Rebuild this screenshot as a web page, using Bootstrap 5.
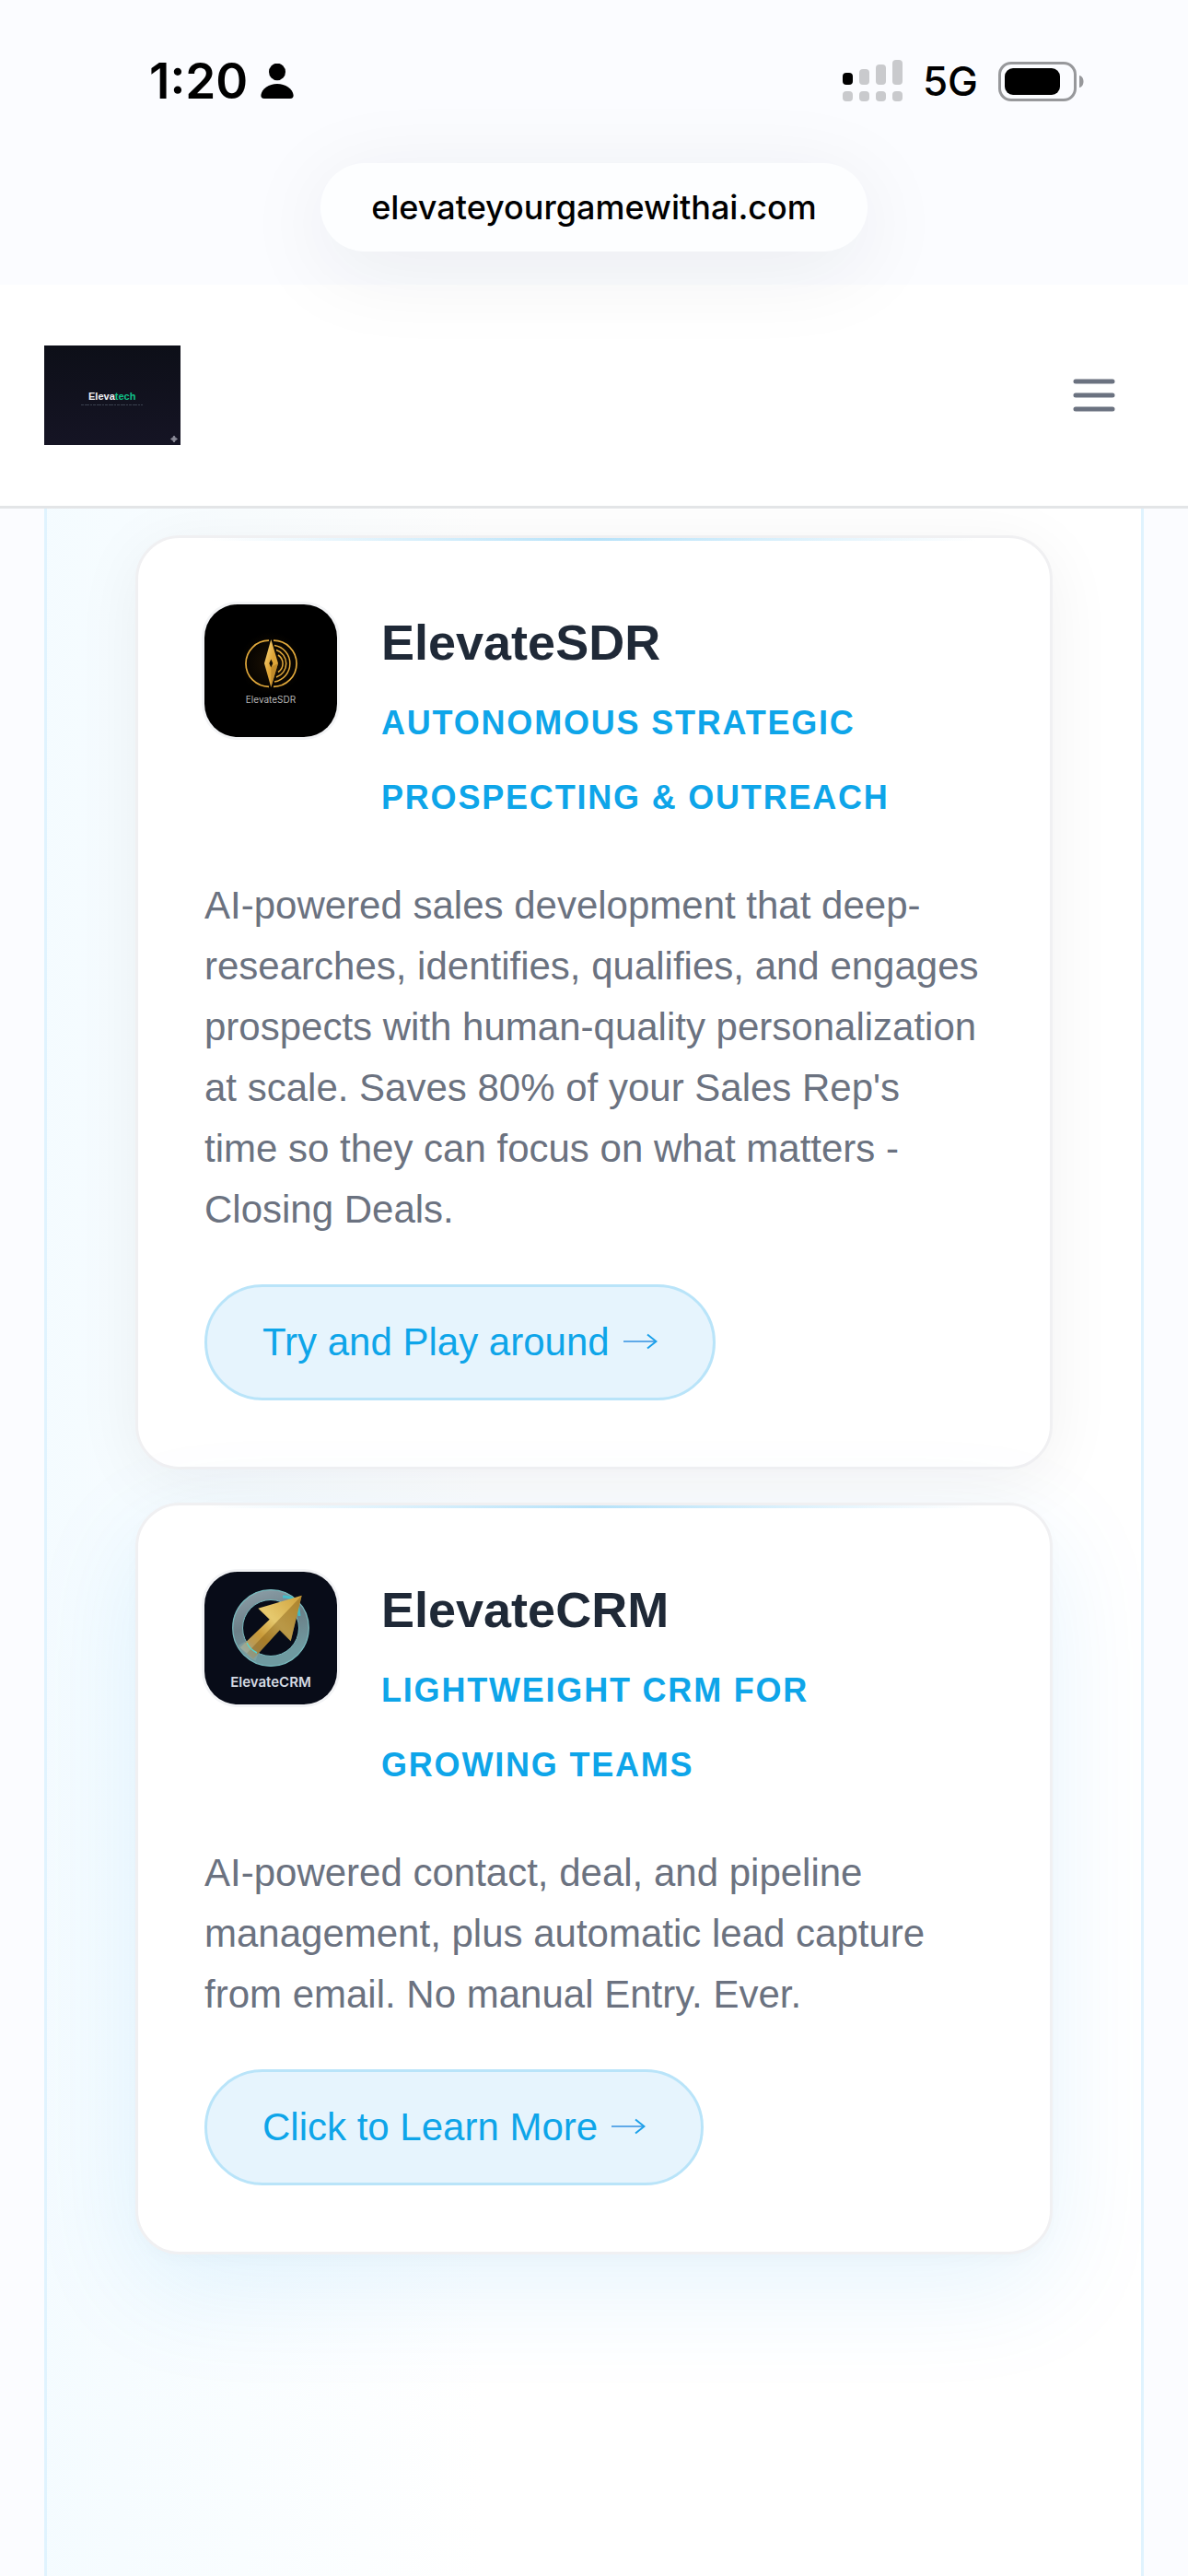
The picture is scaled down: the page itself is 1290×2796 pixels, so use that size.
<!DOCTYPE html>
<html lang="en">
<head>
<meta charset="utf-8">
<meta name="viewport" content="width=device-width, initial-scale=1">
<title>Elevatech</title>
<link href="https://cdn.jsdelivr.net/npm/bootstrap@5.3.0/dist/css/bootstrap.min.css" rel="stylesheet">
<style>
  body { background: #fbfcff; font-family: "Liberation Sans", Arial, sans-serif; color: #1f2937; }
  .phone-top { padding-top: 61px; padding-bottom: 36px; font-family: Inter, sans-serif; color: #000; z-index: 2; }
  .status-row { height: 54px; margin-bottom: 62px; padding-left: 162px; padding-right: 113px; }
  .status-time { font-size: 53px; font-weight: 600; line-height: 54px; margin-right: 14px; }
  .status-net { font-size: 44px; font-weight: 500; line-height: 54px; margin: 0 22px; }
  .address-pill { height: 96px; padding: 0 55px; border-radius: 48px; background: #fdfeff; color: #000; font-size: 36px; font-weight: 500; box-shadow: 0 18px 96px rgba(30, 40, 45, .08); }
  .site-nav { padding: 66px 48px; background: #fff; border-bottom: 3px solid #e3e5e7; }
  .site-nav .navbar-toggler { padding: 30px; border: 0; border-radius: 0; }
  .page-shell { padding: 0 48px; }
  .product-panel { padding: 29px 96px 96px; border: solid #e0f3fe; border-width: 0 3px;
    background: linear-gradient(to right, rgba(243, 251, 255, .9), rgba(255, 255, 255, 0) 40%), #fff; overflow: hidden; }
  .product-list { gap: 36px; }
  .product-card { border: 3px solid #f0f0f2; border-radius: 48px; box-shadow: 0 12px 72px rgba(20, 20, 40, .06); }
  .product-card.is-lit { box-shadow: 0 36px 120px rgba(14, 150, 233, .1), 0 6px 18px rgba(0, 0, 0, .02); }
  .product-card::before { content: ""; height: 3px; margin-bottom: -3px; background: linear-gradient(90deg, transparent 8%, #b6e2f9 50%, transparent 92%); }
  .product-card .card-body { padding: 72px; }
  .product-head { gap: 48px; margin-bottom: 44px; }
  .product-icon { width: 144px; height: 144px; border-radius: 36px; box-shadow: 0 0 0 3px #f3f4f6; }
  .product-name { font-size: 54px; line-height: 82px; font-weight: 700; margin-bottom: 6px; }
  .product-tag { font-size: 36px; line-height: 81px; font-weight: 700; letter-spacing: .05em; color: #0ea5e9; }
  .product-text { font-size: 42px; line-height: 66px; color: #6b7280; margin-bottom: 48px; }
  .btn-soft { --bs-btn-color: #0ea5e9; --bs-btn-bg: #e6f4fd; --bs-btn-border-color: #b9e4f9; --bs-btn-hover-color: #0284c7; --bs-btn-hover-bg: #d6eefc; --bs-btn-hover-border-color: #8fd3f5;
    --bs-btn-border-width: 3px; height: 126px; padding: 0 60px; border-radius: 63px; font-size: 42px; line-height: 60px; gap: 13px; }
</style>
<script src="https://cdn.jsdelivr.net/npm/bootstrap@5.3.0/dist/js/bootstrap.bundle.min.js"></script>
</head>
<body class="d-flex flex-column min-vh-100">

<div class="phone-top position-relative">
  <div class="status-row d-flex align-items-center justify-content-between">
    <div class="d-flex align-items-center">
      <span class="status-time">1:20</span>
      <svg width="36" height="38" viewBox="0 0 36 38" aria-hidden="true"><ellipse cx="18" cy="9" rx="9" ry="9.3"/><path d="M4 38Q0 38 .4 34C1.500 27 9 22 18 22s16.500 5 17.600 12Q36 38 32 38z"/></svg>
    </div>
    <div class="d-flex align-items-center">
      <svg width="65" height="46" viewBox="0 0 65 46" aria-hidden="true">
        <rect x="0" y="14" width="11" height="13" rx="4"/>
        <g fill="#c9cacd"><rect x="18" y="10" width="11" height="17" rx="4"/><rect x="36" y="5" width="11" height="22" rx="4"/><rect x="54" y="0" width="11" height="27" rx="4"/>
        <rect x="0" y="34" width="11" height="11" rx="4"/><rect x="18" y="34" width="11" height="11" rx="4"/><rect x="36" y="34" width="11" height="11" rx="4"/><rect x="54" y="34" width="11" height="11" rx="4"/></g>
      </svg>
      <span class="status-net">5G</span>
      <svg width="93" height="43" viewBox="0 0 93 43" aria-hidden="true"><rect x="1.500" y="1.500" width="82" height="40" rx="12.500" fill="none" stroke="#97989b" stroke-width="3"/><rect x="7" y="7" width="60" height="29" rx="9"/><path d="M88 15c6 1 6 12 0 13z" fill="#97989b"/></svg>
    </div>
  </div>
  <div class="d-flex justify-content-center">
    <a href="#" class="address-pill d-flex align-items-center text-decoration-none">elevateyourgamewithai.com</a>
  </div>
</div>

<nav class="site-nav navbar">
  <a href="#" class="navbar-brand p-0 m-0" aria-label="Elevatech home">
    <svg class="d-block" width="148" height="108" viewBox="0 0 148 108">
      <defs><linearGradient id="lg" x2="0" y2="1"><stop stop-color="#0d0f18"/><stop offset="1" stop-color="#151424"/></linearGradient></defs>
      <rect width="148" height="108" fill="url(#lg)"/>
      <text x="48" y="59" font-family="Liberation Sans, sans-serif" font-weight="700" font-size="11" fill="#f3f4f6">Eleva<tspan fill="#10c088">tech</tspan></text>
      <path d="M40 64.500H107" stroke="#4b5563" stroke-width="1" stroke-dasharray="3 1 5 1 2 1" opacity=".7"/>
      <path d="M141 98l1.300 2.200 2.200 1.300-2.200 1.300-1.300 2.200-1.300-2.200-2.200-1.300 2.200-1.300z" fill="#8b8b98" stroke="#8b8b98"/>
    </svg>
  </a>
  <button class="navbar-toggler" type="button" aria-label="Open menu">
    <svg class="d-block" width="48" height="36" viewBox="0 0 48 36"><path d="M4 3H44M4 18H44M4 33H44" stroke="#6b7280" stroke-width="5" stroke-linecap="round"/></svg>
  </button>
</nav>

<main class="page-shell d-flex flex-column flex-grow-1">
  <section class="product-panel flex-grow-1">
    <div class="product-list d-flex flex-column">

      <article class="product-card card">
        <div class="card-body">
          <div class="product-head d-flex align-items-start">
            <svg class="product-icon flex-shrink-0" viewBox="0 0 144 144" role="img" aria-label="ElevateSDR logo">
              <defs><linearGradient id="gd" x2="1" y2="1"><stop stop-color="#ffe08a"/><stop offset=".5" stop-color="#e0a536"/><stop offset="1" stop-color="#d9a441"/></linearGradient>
              <radialGradient id="gw"><stop stop-color="#1c1103"/><stop offset="1" stop-color="#000"/></radialGradient></defs>
              <rect width="144" height="144" fill="#000"/>
              <circle cx="72" cy="64" r="34" fill="url(#gw)"/>
              <g fill="none" stroke="#e2a93b" stroke-width="1.500">
                <path d="M70 39.200A25 25 0 0 0 70 89.300M75 39.200A25 25 0 0 1 75 89.300" stroke-width="1.700"/>
                <path d="M76 44.500A20 20 0 0 1 76 84M78 49.500A15.500 15.500 0 0 1 78 79M80 55A11 11 0 0 1 80 73.500"/>
              </g>
              <path d="M72.300 38L80 64 72.300 90 65 64z" fill="url(#gd)"/>
              <path d="M72.300 68L80 64 72.300 90z" fill="#a8741d" opacity=".55"/>
              <path d="M72.300 59.500L74.300 64 72.300 68.500 70.300 64z" fill="#120b02"/>
              <text x="72" y="107" text-anchor="middle" font-family="Inter, sans-serif" font-size="10" fill="#b5b5b5">ElevateSDR</text>
            </svg>
            <div>
              <h2 class="product-name">ElevateSDR</h2>
              <div class="product-tag text-uppercase">Autonomous Strategic Prospecting &amp; Outreach</div>
            </div>
          </div>
          <p class="product-text">AI-powered sales development that deep-researches, identifies, qualifies, and engages prospects with human-quality personalization at scale. Saves 80% of your Sales Rep's time so they can focus on what matters - Closing Deals.</p>
          <a href="#" class="btn btn-soft d-inline-flex align-items-center">Try and Play around
            <svg width="39" height="20" viewBox="0 0 39 20" fill="none" stroke-width="2" aria-hidden="true"><path d="M2 9H37" stroke="#5fa9e8"/><path d="M28 1.500L37.500 9 28 16.500" stroke="#1ba0ea"/></svg></a>
        </div>
      </article>

      <article class="product-card card is-lit">
        <div class="card-body">
          <div class="product-head d-flex align-items-start">
            <svg class="product-icon flex-shrink-0" viewBox="0 0 144 144" role="img" aria-label="ElevateCRM logo">
              <defs>
                <linearGradient id="rg" x2=".3" y2="1"><stop stop-color="#8b9da6"/><stop offset=".5" stop-color="#6c8088"/><stop offset="1" stop-color="#6f9aa0"/></linearGradient>
                <linearGradient id="ga" gradientUnits="userSpaceOnUse" x1="44" y1="90" x2="106" y2="26"><stop stop-color="#a8b0a0"/><stop offset=".16" stop-color="#b99a55"/><stop offset=".3" stop-color="#c99a38"/><stop offset=".55" stop-color="#e6c96e"/><stop offset="1" stop-color="#d0a23c"/></linearGradient>
              </defs>
              <rect width="144" height="144" fill="#080c18"/>
              <circle cx="72" cy="61" r="36" fill="none" stroke="url(#rg)" stroke-width="11"/>
              <circle cx="72" cy="61" r="41.300" fill="none" stroke="#78b9bd" stroke-width="1.200"/>
              <circle cx="72" cy="61" r="30.500" fill="none" stroke="#78b9bd" stroke-width="1"/>
              <path d="M85 27Q94 27 101 32L103 48" fill="none" stroke="#2fd0dd" stroke-width="3" opacity=".75"/>
              <path d="M105.700 25.700L58.300 39.700 70.700 51.700 38.700 82.300 53 94.700 81.700 63.300 93.700 75.300z" fill="url(#ga)"/>
              <path d="M105.700 25.700L46 88.500 53 94.700 81.700 63.300 93.700 75.300z" fill="#7d5512" opacity=".42"/>
              <path d="M40 78Q46 89 57 93" fill="none" stroke="#8ba9a8" stroke-width="8" opacity=".5"/>
              <path d="M46 77Q49 84 57 88" fill="none" stroke="#55d3d2" stroke-width="1.500"/>
              <text x="72" y="125" text-anchor="middle" font-family="Inter, sans-serif" font-weight="600" font-size="15" fill="#d5dae3">ElevateCRM</text>
            </svg>
            <div>
              <h2 class="product-name">ElevateCRM</h2>
              <div class="product-tag text-uppercase">Lightweight CRM for Growing Teams</div>
            </div>
          </div>
          <p class="product-text">AI-powered contact, deal, and pipeline management, plus automatic lead capture from email. No manual Entry. Ever.</p>
          <a href="#" class="btn btn-soft d-inline-flex align-items-center">Click to Learn More
            <svg width="39" height="20" viewBox="0 0 39 20" fill="none" stroke-width="2" aria-hidden="true"><path d="M2 9H37" stroke="#5fa9e8"/><path d="M28 1.500L37.500 9 28 16.500" stroke="#1ba0ea"/></svg></a>
        </div>
      </article>

    </div>
  </section>
</main>
</body>
</html>
